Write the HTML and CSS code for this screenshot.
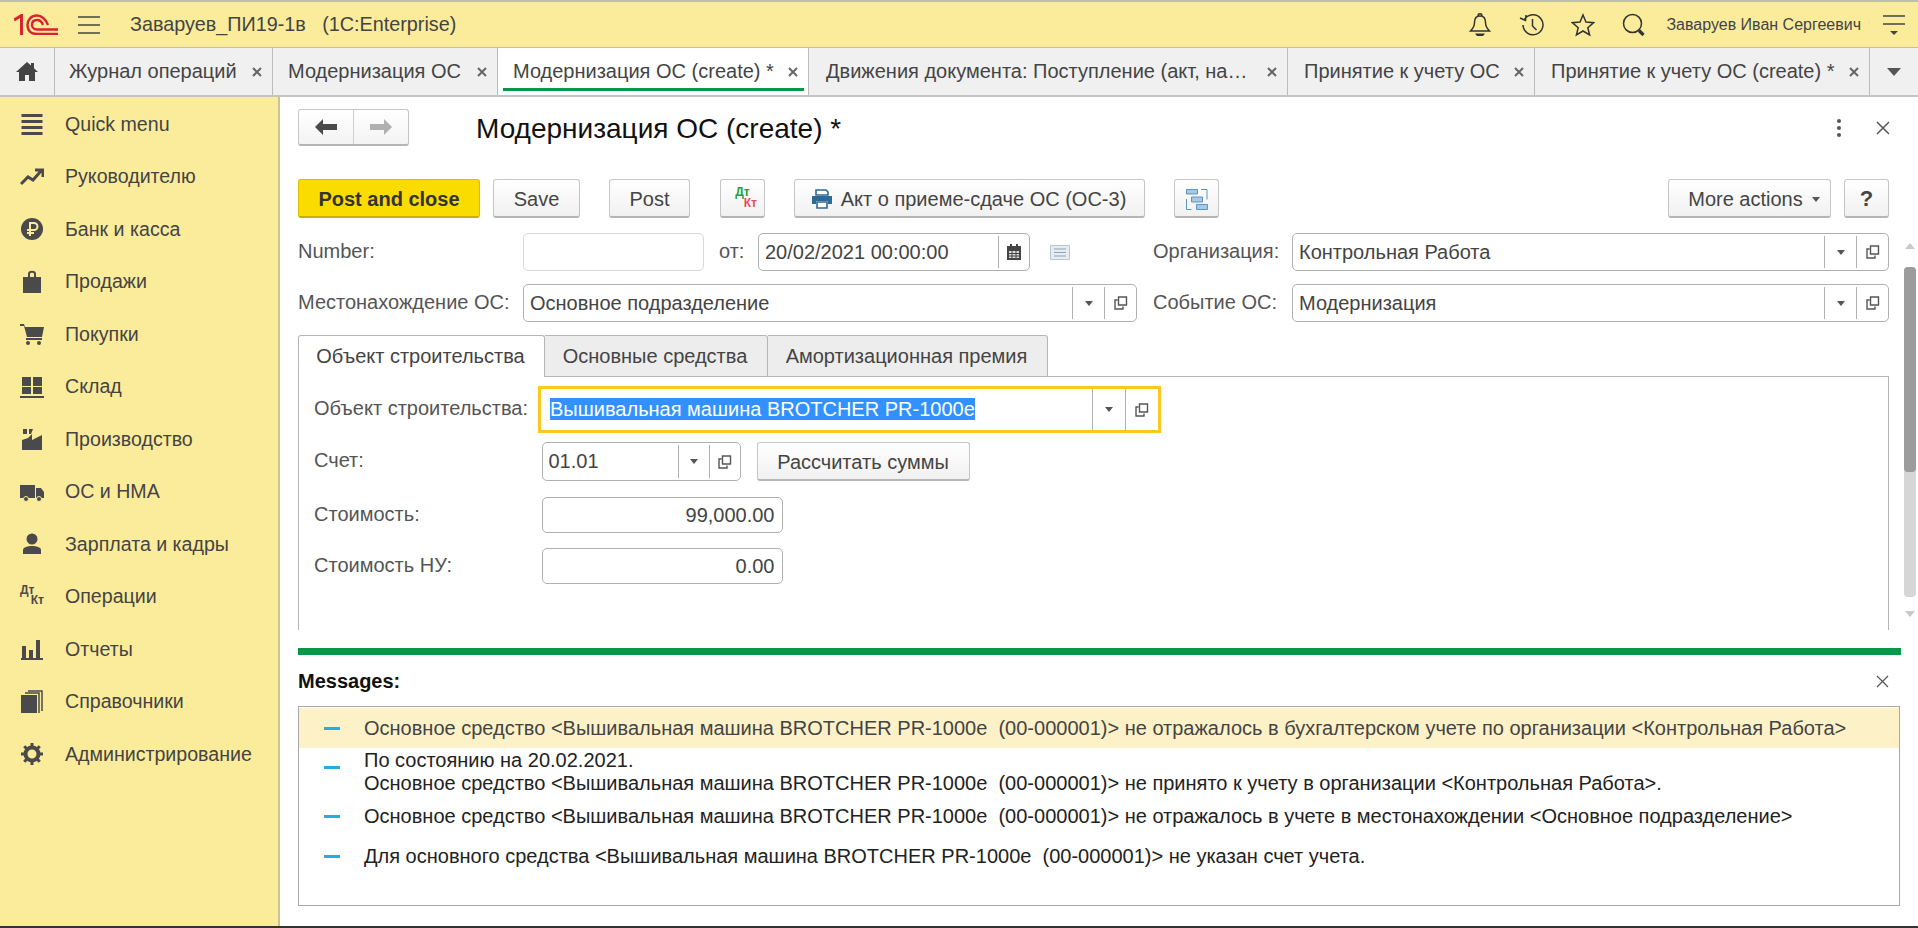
FILE: index.html
```html
<!DOCTYPE html>
<html lang="ru">
<head>
<meta charset="UTF-8">
<title>Модернизация ОС (create) *</title>
<link rel="stylesheet" href="styles.css">
</head>
<body>
<svg class="defs" width="0" height="0">
  <symbol id="copy" viewBox="0 0 14 14"><path d="M4.500 1h8v8h-8z M3.500 4H1v9h8v-2.500" fill="none" stroke="#555" stroke-width="1.400"/></symbol>
  <symbol id="x" viewBox="0 0 10 10"><path d="M1 1l8 8M9 1l-8 8" fill="none" stroke="#666" stroke-width="2"/></symbol>
</svg>

<header class="topbar">
  <svg class="logo" width="44" height="21" viewBox="0 0 44 21"><path d="M0 6l7.500-4.500V21" fill="none" stroke="#d9232e" stroke-width="3"/><path d="M34 11C32 5 27 1.500 23 1.500 17 1.500 13.500 6 13.500 11c0 5.500 3.500 9 9.500 9h21M29 11c-1-3-3-5-6-5s-5 2-5 5c0 2.500 2 4.500 5 4.500h21" fill="none" stroke="#d9232e" stroke-width="2.400"/></svg>
  <svg class="burger" width="22" height="18" viewBox="0 0 22 18"><path d="M0 1h22M0 9h22M0 17h22" stroke="#444" stroke-width="1.500"/></svg>
  <span class="app-title">Заваруев_ПИ19-1в&nbsp;&nbsp; (1C:Enterprise)</span>
  <div class="top-icons">
    <svg width="22" height="24" viewBox="0 0 22 24"><path d="M11 3c-3.500 0-5.500 2.500-5.500 6.500 0 4-1.500 6-4 8.500h19c-2.500-2.500-4-4.500-4-8.500C16.500 5.500 14.500 3 11 3zM9 3c0-3 4-3 4 0" fill="none" stroke="#333" stroke-width="1.500"/><path d="M6 20.500h10l-2 2.500H8z" fill="#333"/></svg>
    <svg width="25" height="24" viewBox="0 0 25 24"><path d="M5.500 6.500A10 10 0 1 1 4 12M1 5l5.500 2.500L7 2M13.500 6v7l4 4" fill="none" stroke="#333" stroke-width="1.500"/></svg>
    <svg width="24" height="24" viewBox="0 0 24 24"><path d="M12 2l3 7 7.500.7-5.700 5 1.800 7.300L12 18l-6.600 4 1.800-7.300-5.700-5L9 9z" fill="none" stroke="#333" stroke-width="1.500"/></svg>
    <svg width="24" height="24" viewBox="0 0 24 24"><circle cx="10.500" cy="10.500" r="9" fill="none" stroke="#333" stroke-width="1.500"/><path d="M17 17.500l4.500 4.500" stroke="#333" stroke-width="3.200"/></svg>
    <span class="user-name">Заваруев Иван Сергеевич</span>
    <svg width="22" height="24" viewBox="0 0 22 24"><path d="M0 3h22M0 11h22" stroke="#444" stroke-width="1.500"/><path d="M7 18h8l-4 4z" fill="#444"/></svg>
  </div>
</header>

<nav class="tabbar">
  <div class="tab home"><svg width="22" height="19" viewBox="0 0 22 19"><path d="M11 0L0 10h3v9h6v-6h4v6h6v-9h3l-4-3.700V1h-3v2.600z" fill="#444"/></svg></div>
  <div class="tab t1"><span>Журнал операций</span><svg class="tab-x"><use href="#x"/></svg></div>
  <div class="tab t2"><span>Модернизация ОС</span><svg class="tab-x"><use href="#x"/></svg></div>
  <div class="tab t3 active"><span>Модернизация ОС (create) *</span><svg class="tab-x"><use href="#x"/></svg></div>
  <div class="tab t4"><span>Движения документа: Поступление (акт, на…</span><svg class="tab-x"><use href="#x"/></svg></div>
  <div class="tab t5"><span>Принятие к учету ОС</span><svg class="tab-x"><use href="#x"/></svg></div>
  <div class="tab t6"><span>Принятие к учету ОС (create) *</span><svg class="tab-x"><use href="#x"/></svg></div>
  <div class="tab-more"></div>
</nav>

<div class="main">
  <aside class="sidebar">
    <div class="nav-item"><svg width="24" height="24" viewBox="0 0 24 24"><path d="M1.500 3.500h21M1.500 9.500h21M1.500 15.500h21M1.500 21.500h21" stroke="#4a4a4a" stroke-width="3"/></svg>Quick menu</div>
    <div class="nav-item"><svg width="24" height="24" viewBox="0 0 24 24"><path d="M1 19l7-7 5 3 8-9M15 5h8v7" fill="none" stroke="#4a4a4a" stroke-width="3"/></svg>Руководителю</div>
    <div class="nav-item"><svg width="24" height="24" viewBox="0 0 24 24"><circle cx="12" cy="12" r="11" fill="#4a4a4a"/><path d="M10 19V6h4a3.500 3.500 0 0 1 0 7H7M7 16h7" fill="none" stroke="#fbec9c" stroke-width="2"/></svg>Банк и касса</div>
    <div class="nav-item"><svg width="24" height="24" viewBox="0 0 24 24"><path d="M3 7h18v16H3z" fill="#4a4a4a"/><path d="M9 11V4c0-3 6-3 6 0v7" fill="none" stroke="#4a4a4a" stroke-width="2"/></svg>Продажи</div>
    <div class="nav-item"><svg width="24" height="24" viewBox="0 0 24 24"><path d="M0 2h4l1 3h19l-2 10H7L4 4H0z" fill="#4a4a4a"/><path d="M6 16h16v2H6z" fill="#4a4a4a"/><circle cx="8" cy="21" r="2" fill="#4a4a4a"/><circle cx="19" cy="21" r="2" fill="#4a4a4a"/></svg>Покупки</div>
    <div class="nav-item"><svg width="24" height="24" viewBox="0 0 24 24"><path d="M2 2h9v9H2zM13 2h9v9h-9zM2 12h9v7H2zM13 12h9v7h-9zM0 21h24v2H0z" fill="#4a4a4a"/></svg>Склад</div>
    <div class="nav-item"><svg width="24" height="24" viewBox="0 0 24 24"><path d="M2 23V13l6-2 4-4v6l10-5v15zM3 2h4v5H3zM9 2h4l-2 5H9z" fill="#4a4a4a"/></svg>Производство</div>
    <div class="nav-item"><svg width="24" height="24" viewBox="0 0 24 24"><path d="M0 5h15v13H0zM16 8h5l3 4v6h-8z" fill="#4a4a4a"/><circle cx="6" cy="19" r="2.500" fill="#4a4a4a" stroke="#fbec9c"/><circle cx="19" cy="19" r="2.500" fill="#4a4a4a" stroke="#fbec9c"/></svg>ОС и НМА</div>
    <div class="nav-item"><svg width="24" height="24" viewBox="0 0 24 24"><circle cx="12" cy="7" r="5.500" fill="#4a4a4a"/><path d="M3 22v-4c0-3 5-4 9-4s9 1 9 4v4z" fill="#4a4a4a"/></svg>Зарплата и кадры</div>
    <div class="nav-item"><span class="dtkt mono"><i>Дт</i><b>Кт</b></span>Операции</div>
    <div class="nav-item"><svg width="24" height="24" viewBox="0 0 24 24"><path d="M2 9h4v12H2zM9 13h4v8H9zM16 3h4v18h-4zM1 21h22v2H1z" fill="#4a4a4a"/></svg>Отчеты</div>
    <div class="nav-item"><svg width="24" height="24" viewBox="0 0 24 24"><path d="M1 5h16v18H1z" fill="#4a4a4a"/><path d="M19 23V3H5M22 21V1H8" fill="none" stroke="#4a4a4a" stroke-width="1.500"/></svg>Справочники</div>
    <div class="nav-item"><svg width="24" height="24" viewBox="0 0 24 24"><circle cx="12" cy="12" r="6.500" fill="none" stroke="#4a4a4a" stroke-width="4"/><path d="M12 1v22M1 12h22M4.200 4.200l15.600 15.600M19.800 4.200L4.200 19.800" stroke="#4a4a4a" stroke-width="3" stroke-dasharray="4 14 4"/></svg>Администрирование</div>
  </aside>

  <main class="content">
    <div class="form">
      <div class="form-head">
        <div class="nav-btns">
          <span class="nav-btn"><svg width="22" height="16" viewBox="0 0 22 16"><path d="M8 0v5h14v6H8v5L0 8z" fill="#4a4a4a"/></svg></span>
          <span class="nav-btn"><svg width="22" height="16" viewBox="0 0 22 16"><path d="M14 0v5H0v6h14v5l8-8z" fill="#b0b0b0"/></svg></span>
        </div>
        <h1 class="form-title">Модернизация ОС (create) *</h1>
        <span class="dots"><i></i><i></i><i></i></span>
        <svg class="form-close" width="14" height="14" viewBox="0 0 14 14"><path d="M1 1l12 12M13 1L1 13" stroke="#555" stroke-width="1.500"/></svg>
      </div>

      <div class="toolbar">
        <button class="btn primary">Post and close</button>
        <button class="btn b-save">Save</button>
        <button class="btn b-post">Post</button>
        <button class="btn b-dt"><span class="dtkt color"><i>Дт</i><b>Кт</b></span></button>
        <button class="btn b-akt"><svg width="22" height="20" viewBox="0 0 22 20"><path d="M5 6V1h10l2 2v3z" fill="#fff" stroke="#2f6a96" stroke-width="1.600"/><path d="M1 7h20v8h-4v-3H5v3H1z" fill="#2f6a96"/><path d="M6 13h10v6H6z" fill="#fff" stroke="#2f6a96" stroke-width="1.600"/></svg>Акт о приеме-сдаче ОС (ОС-3)</button>
        <button class="btn b-struct"><svg width="22" height="21" viewBox="0 0 22 21"><path d="M.5.500h11V5H.5zM5.500 8h11v5h-11zM10.500 15.500h11v5h-11z" fill="#a9c8e2" stroke="#5b95c4"/><path d="M15 .5h6v10M.5 10v10.500h5" fill="none" stroke="#5b95c4"/></svg></button>
        <button class="btn b-more">More actions<i class="caret"></i></button>
        <button class="btn b-help">?</button>
      </div>

      <div class="field-row r1">
        <label class="lbl l-num">Number:</label>
        <div class="input i-num"></div>
        <label class="lbl l-ot">от:</label>
        <div class="input i-date"><span class="val">20/02/2021 00:00:00</span><span class="addon cal"><svg width="14" height="16" viewBox="0 0 14 16"><path d="M0 2h14v14H0z" fill="#444"/><path d="M3 0h2v3H3zM9 0h2v3H9z" fill="#444"/><path d="M2 7h10v7H2z" fill="#ddd"/><path d="M2 9.500h10M2 12h10M5 7v7M9 7v7" stroke="#444"/></svg></span></div>
        <svg class="note" width="20" height="15" viewBox="0 0 20 15"><path d="M.5.500h19v14H.5z" fill="#e6ecf1" stroke="#b7c6d2"/><path d="M4 4h12M4 7.500h12M4 11h12" stroke="#8ea3b3"/></svg>
        <label class="lbl l-org">Организация:</label>
        <div class="input i-org"><span class="val">Контрольная Работа</span><span class="addon"><i class="caret"></i></span><span class="addon"><svg class="copy"><use href="#copy"/></svg></span></div>
      </div>

      <div class="field-row r2">
        <label class="lbl l-num">Местонахождение ОС:</label>
        <div class="input i-place"><span class="val">Основное подразделение</span><span class="addon"><i class="caret"></i></span><span class="addon"><svg class="copy"><use href="#copy"/></svg></span></div>
        <label class="lbl l-evt">Событие ОС:</label>
        <div class="input i-org"><span class="val">Модернизация</span><span class="addon"><i class="caret"></i></span><span class="addon"><svg class="copy"><use href="#copy"/></svg></span></div>
      </div>

      <div class="page-tabs">
        <div class="page-tab on pt1">Объект строительства</div>
        <div class="page-tab pt2">Основные средства</div>
        <div class="page-tab pt3">Амортизационная премия</div>
      </div>
      <div class="panel">
        <div class="p-row">
          <label class="lbl p-lbl">Объект строительства:</label>
          <div class="input focus"><span class="val"><span class="sel">Вышивальная машина BROTCHER PR-1000e</span></span><span class="addon"><i class="caret"></i></span><span class="addon"><svg class="copy"><use href="#copy"/></svg></span></div>
        </div>
        <div class="p-row acc">
          <label class="lbl p-lbl">Счет:</label>
          <div class="input i-acc"><span class="val">01.01</span><span class="addon"><i class="caret"></i></span><span class="addon"><svg class="copy"><use href="#copy"/></svg></span></div>
          <button class="btn b-calc">Рассчитать суммы</button>
        </div>
        <div class="p-row sum1">
          <label class="lbl p-lbl">Стоимость:</label>
          <div class="input i-sum">99,000.00</div>
        </div>
        <div class="p-row sum2">
          <label class="lbl p-lbl">Стоимость НУ:</label>
          <div class="input i-sum">0.00</div>
        </div>
      </div>
    </div>

    <div class="splitter"></div>
    <div class="msg-head"><b>Messages:</b><svg width="13" height="13" viewBox="0 0 13 13"><path d="M1 1l11 11M12 1L1 12" stroke="#555" stroke-width="1.200"/></svg></div>
    <div class="msg-box">
      <div class="msg m1 hl"><i class="dash"></i><p>Основное средство &lt;Вышивальная машина BROTCHER PR-1000e&nbsp; (00-000001)&gt; не отражалось в бухгалтерском учете по организации &lt;Контрольная Работа&gt;</p></div>
      <div class="msg m2"><i class="dash"></i><p>По состоянию на 20.02.2021.<br>Основное средство &lt;Вышивальная машина BROTCHER PR-1000e&nbsp; (00-000001)&gt; не принято к учету в организации &lt;Контрольная Работа&gt;.</p></div>
      <div class="msg m3"><i class="dash"></i><p>Основное средство &lt;Вышивальная машина BROTCHER PR-1000e&nbsp; (00-000001)&gt; не отражалось в учете в местонахождении &lt;Основное подразделение&gt;</p></div>
      <div class="msg m4"><i class="dash"></i><p>Для основного средства &lt;Вышивальная машина BROTCHER PR-1000e&nbsp; (00-000001)&gt; не указан счет учета.</p></div>
    </div>

    <div class="scrollbar">
      <i class="arrow up"></i>
      <div class="track"><div class="thumb"></div></div>
      <i class="arrow down"></i>
    </div>
  </main>
</div>
<div class="bottom-line"></div>
</body>
</html>
```

FILE: styles.css
```css
* {
  box-sizing: border-box;
}
html, body {
  margin: 0;
  height: 928px;
  overflow: hidden;
}
body {
  font-family: "Liberation Sans", Arial, sans-serif;
  font-size: 20px;
  color: #444;
  background: #fff;
  display: flex;
  flex-direction: column;
}
.defs {
  position: absolute;
}
svg {
  flex: none;
  display: block;
}

/* top bar */
.topbar {
  height: 48px;
  flex: none;
  display: flex;
  align-items: center;
  background: #fbec9c;
  border-top: 2px solid #bdbdb0;
  border-bottom: 1px solid #c9bf8c;
}
.logo {
  margin-left: 14px;
}
.burger {
  margin-left: 20px;
}
.app-title {
  margin-left: 30px;
  color: #444;
  font-size: 19.800px;
}
.top-icons {
  margin-left: auto;
  display: flex;
  align-items: center;
}
.top-icons svg:nth-child(1) {
  margin-right: 28px;
}
.top-icons svg:nth-child(2) {
  margin-right: 27px;
}
.top-icons svg:nth-child(3) {
  margin-right: 27px;
}
.user-name {
  margin: 0 22px 0 20px;
  font-size: 16px;
}
.top-icons svg:last-child {
  margin-right: 13px;
}

/* tabs */
.tabbar {
  height: 49px;
  flex: none;
  display: flex;
  background: #f0f0f0;
  border-bottom: 2px solid #c4c4c4;
}
.tab {
  display: flex;
  align-items: center;
  height: 47px;
  border-right: 1px solid #bcbcbc;
  padding-left: 14px;
  white-space: nowrap;
  position: relative;
}
.tab-x {
  width: 10px;
  height: 10px;
  position: absolute;
  right: 10px;
  top: 19px;
}
.home {
  width: 55px;
  justify-content: center;
  padding: 0;
}
.t1 { width: 218px; }
.t2 { width: 225px; padding-left: 15px; }
.t3 { width: 311px; padding-left: 15px; background: #fff; }
.t3::after {
  content: "";
  position: absolute;
  left: 5px;
  right: 4px;
  bottom: 4px;
  height: 3px;
  background: #059848;
}
.t4 { width: 479px; padding-left: 17px; }
.t5 { width: 247px; padding-left: 16px; }
.t6 { width: 335px; padding-left: 16px; }
.tab-more {
  flex: 1;
  display: flex;
  align-items: center;
  justify-content: center;
}
.tab-more::after {
  content: "";
  border: 7px solid transparent;
  border-top: 8px solid #555;
  border-bottom: 0;
}

/* sidebar */
.main {
  flex: 1;
  display: flex;
  min-height: 0;
}
.sidebar {
  width: 280px;
  flex: none;
  padding-top: 1px;
  background: #fbec9c;
  border-right: 2px solid #cdc38e;
}
.nav-item {
  height: 52.500px;
  display: flex;
  align-items: center;
  padding-left: 20px;
  gap: 21px;
  color: #444;
  font-size: 19.600px;
}
.dtkt {
  width: 24px;
  height: 24px;
  display: flex;
  flex-direction: column;
  font-size: 12px;
  font-weight: bold;
  line-height: 10px;
}
.dtkt i {
  font-style: normal;
}
.dtkt b {
  align-self: flex-end;
}
.mono {
  color: #4a4a4a;
}
.color {
  width: 29px;
  font-size: 12px;
  line-height: 11px;
}
.color i {
  color: #16a34a;
}
.color b {
  color: #ec4a55;
}

/* form */
.content {
  flex: 1;
  position: relative;
  padding-left: 18px;
  min-width: 0;
}
.form {
  width: 1591px;
}
.form-head {
  display: flex;
  align-items: center;
  height: 37px;
  margin-top: 12px;
}
.nav-btns {
  display: flex;
  width: 111px;
  height: 37px;
  border: 1px solid #c6c6c6;
  border-bottom: 2px solid #b5b5b5;
  border-radius: 3px;
  background: linear-gradient(#fff, #f3f3f3);
}
.nav-btn {
  flex: 1;
  display: flex;
  align-items: center;
  justify-content: center;
}
.nav-btn + .nav-btn {
  border-left: 1px solid #d0d0d0;
}
.form-title {
  margin: 2px 0 0 67px;
  font-size: 28px;
  font-weight: normal;
  color: #111;
}
.dots {
  margin-left: auto;
  display: flex;
  flex-direction: column;
  gap: 3px;
}
.dots i {
  width: 4px;
  height: 4px;
  border-radius: 50%;
  background: #555;
}
.form-close {
  margin: 0 -1px 0 35px;
}
.toolbar {
  display: flex;
  margin-top: 33px;
  height: 39px;
}
.btn {
  height: 39px;
  padding: 2px 0 0;
  font: inherit;
  color: #444;
  border: 1px solid #c6c6c6;
  border-bottom: 2px solid #b5b5b5;
  border-radius: 3px;
  background: linear-gradient(#fff, #f1f1f1);
  display: flex;
  align-items: center;
  justify-content: center;
}
.primary {
  width: 182px;
  font-weight: bold;
  color: #333;
  background: #fbdc00;
  border-color: #dcc000;
  border-bottom-color: #c9af00;
}
.b-save { width: 87px; margin-left: 13px; }
.b-post { width: 81px; margin-left: 29px; }
.b-dt { width: 45px; margin-left: 30px; }
.b-akt { width: 351px; margin-left: 29px; gap: 8px; padding-right: 2px; }
.b-struct { width: 45px; margin-left: 29px; }
.b-more { width: 163px; margin-left: auto; gap: 9px; padding-left: 9px; }
.b-help { width: 45px; margin-left: 13px; font-weight: bold; font-size: 22px; }
.b-calc { width: 213px; margin-left: 16px; }
.caret {
  display: block;
  border: 4px solid transparent;
  border-top: 5px solid #555;
  border-bottom: 0;
}
.field-row {
  display: flex;
  align-items: center;
  height: 38px;
}
.r1 { margin-top: 15px; }
.r2 { margin-top: 13px; }
.lbl {
  flex: none;
  color: #555;
  margin-top: -2px;
}
.l-num { width: 225px; }
.l-ot { width: 39px; margin-left: 15px; }
.l-org { width: 139px; margin-left: 83px; }
.l-evt { width: 139px; margin-left: 16px; }
.input {
  flex: none;
  height: 38px;
  display: flex;
  align-items: stretch;
  border: 1px solid #b0b0b0;
  border-radius: 5px;
  background: #fff;
  line-height: 36px;
}
.val {
  flex: 1;
  padding-left: 6px;
  white-space: nowrap;
  overflow: hidden;
}
.addon {
  flex: none;
  width: 32px;
  margin: 2px 0;
  display: flex;
  align-items: center;
  justify-content: center;
  border-left: 1px solid #b0b0b0;
}
.copy {
  width: 14px;
  height: 14px;
}
.i-num { width: 181px; border-color: #d8d8d8; }
.i-date { width: 272px; }
.cal { width: 31px; }
.note { margin-left: 20px; }
.i-org { width: 597px; }
.i-place { width: 614px; }
.page-tabs {
  display: flex;
  height: 42px;
  margin-top: 13px;
}
.page-tab {
  height: 42px;
  display: flex;
  align-items: center;
  justify-content: center;
  padding-right: 2px;
  color: #444;
  background: #ededed;
  border: 1px solid #b5b5b5;
  border-left: 0;
  border-radius: 0 3px 0 0;
}
.pt1 { width: 247px; }
.pt2 { width: 223px; }
.pt3 { width: 280px; }
.page-tab.on {
  background: #fff;
  border-left: 1px solid #b5b5b5;
  border-bottom: 0;
  border-radius: 3px 3px 0 0;
  position: relative;
}
.panel {
  height: 254px;
  margin-top: -1px;
  padding: 9px 0 0 15px;
  border: 1px solid #b5b5b5;
  border-bottom: 0;
}
.p-row {
  display: flex;
  align-items: center;
}
.p-lbl { width: 224px; }
.focus {
  width: 623px;
  height: 47px;
  border: 3px solid #fdc81e;
  border-radius: 0;
  line-height: 41px;
}
.focus .val { padding-left: 9px; }
.focus .addon { margin: 0; height: 41px; width: 33px; }
.sel {
  background: #3391ff;
  color: #fff;
}
.acc { margin-top: 9px; }
.i-acc { width: 199px; height: 39px; margin-left: 3.500px; }
.i-acc .addon { width: 31px; }
.sum1 { margin-top: 16px; }
.sum2 { margin-top: 15px; }
.i-sum {
  width: 241px;
  height: 36px;
  margin-left: 3.500px;
  justify-content: flex-end;
  padding-right: 7px;
  line-height: 34px;
}

/* messages */
.splitter {
  width: 1603px;
  height: 7px;
  margin-top: 18px;
  background: #059848;
}
.msg-head {
  width: 1591px;
  height: 51px;
  display: flex;
  align-items: center;
  justify-content: space-between;
  padding-top: 1px;
  color: #111;
}
.msg-box {
  width: 1602px;
  height: 200px;
  padding-top: 1px;
  border: 1px solid #a8a8a8;
}
.msg {
  display: flex;
  align-items: center;
  padding-left: 25px;
  color: #444;
}
.msg p {
  margin: 0 0 0 24px;
  line-height: 23px;
}
.dash {
  width: 16px;
  height: 3px;
  background: #29abe2;
  flex: none;
}
.m1 { height: 40px; }
.hl { background: #fdf2c7; }
.m2 { height: 48px; color: #222; }
.m2 .dash { margin-top: -9px; }
.m3 { height: 41px; color: #222; }
.m4 { height: 38px; color: #222; }

/* scrollbar */
.scrollbar {
  position: absolute;
  left: 1624px;
  top: 146px;
  width: 12px;
}
.arrow {
  position: absolute;
  left: 1px;
  border: 5px solid transparent;
}
.arrow.up {
  top: 0;
  border-bottom: 6px solid #c9c9c9;
  border-top: 0;
}
.arrow.down {
  top: 368px;
  border-top: 6px solid #c9c9c9;
  border-bottom: 0;
}
.track {
  position: absolute;
  top: 24px;
  width: 12px;
  height: 330px;
  border-radius: 4px;
  background: #d6d6d6;
}
.thumb {
  height: 205px;
  border-radius: 4px;
  background: #9c9c9c;
}
.bottom-line {
  flex: none;
  height: 2px;
  background: #333;
}
```
